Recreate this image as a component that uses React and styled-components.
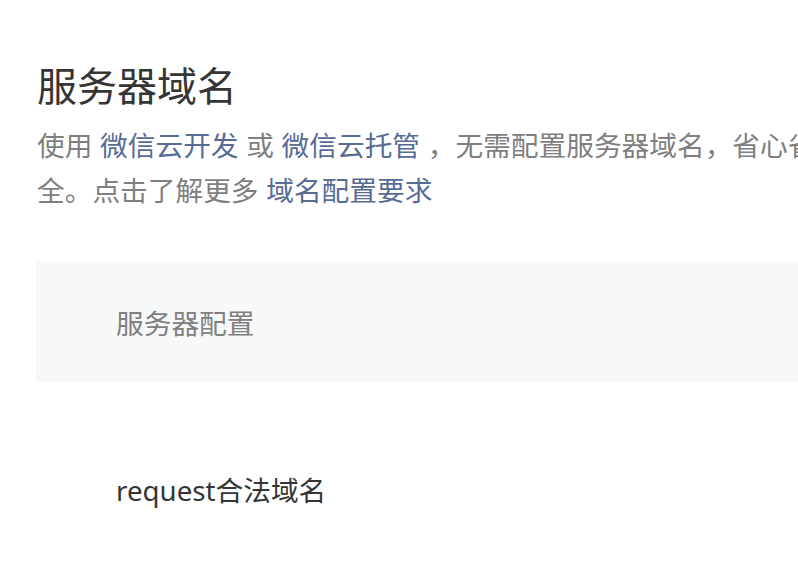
import React from 'react'
import styled, { createGlobalStyle } from 'styled-components'

const GlobalStyle = createGlobalStyle`
    html, body {
        margin: 0;
        padding: 0;
        background: #ffffff;
        overflow: hidden;
    }
    body {
        font-family: "Noto Sans", "Noto Sans CJK SC", sans-serif;
        -webkit-font-smoothing: antialiased;
    }
`;

const rows = [
    { name: 'request合法域名' },
]

function App() {
    return (
        <>
            <GlobalStyle />
            <PageStyled>
                <Title>服务器域名</Title>
                <Desc>
                    使用 <Link>微信云开发</Link> 或 <Link>微信云托管</Link> ，无需配置服务器域名，省心省力又安全。点击了解更多 <Link>域名配置要求</Link>
                </Desc>
                <Table>
                    <HeadRow>服务器配置</HeadRow>
                    {rows.map((row) => (
                        <Row key={row.name}>{row.name}</Row>
                    ))}
                </Table>
            </PageStyled>
        </>
    )
}

const PageStyled = styled.div`
    width: 890px;
    padding: 58px 0 0 36px;
`;

const Title = styled.h2`
    margin: 0;
    padding-left: 1px;
    font-size: 40px;
    line-height: 56px;
    font-weight: 400;
    color: #353535;
`;

const Desc = styled.p`
    margin: 10px 0 0;
    padding-left: 1px;
    font-family: "Liberation Sans", "Noto Sans CJK SC", sans-serif;
    font-size: 27.7px;
    line-height: 45px;
    color: #7f7f7f;
`;

const Link = styled.a`
    color: #576b95;
    text-decoration: none;
    cursor: pointer;
`;

const Table = styled.div`
    margin-top: 48px;
    display: flex;
    flex-direction: column;
`;

const HeadRow = styled.div`
    height: 120px;
    display: flex;
    align-items: center;
    padding-left: 80px;
    background: #f7f8fa;
    font-size: 27.7px;
    color: #808080;
`;

const Row = styled.div`
    height: 214px;
    display: flex;
    align-items: center;
    padding-left: 80px;
    font-size: 27.7px;
    color: #353535;
`;

export default App
